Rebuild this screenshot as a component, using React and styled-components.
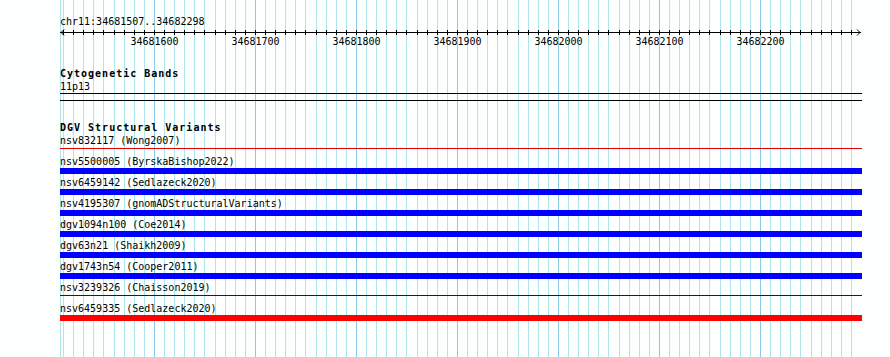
import React from 'react';
import styled, {createGlobalStyle} from 'styled-components';

/* Data */
const START = 34681507;
const END = 34682298;
const TRACK_WIDTH = 800;
const toX = bp => Math.round(((bp - START) * TRACK_WIDTH) / (END - START + 1));

const variants = [
  {name: 'nsv832117 (Wong2007)', kind: 'line', color: '#e00000'},
  {name: 'nsv5500005 (ByrskaBishop2022)', kind: 'bar', color: '#0000ff'},
  {name: 'nsv6459142 (Sedlazeck2020)', kind: 'bar', color: '#0000ff'},
  {name: 'nsv4195307 (gnomADStructuralVariants)', kind: 'bar', color: '#0000ff'},
  {name: 'dgv1094n100 (Coe2014)', kind: 'bar', color: '#0000ff'},
  {name: 'dgv63n21 (Shaikh2009)', kind: 'bar', color: '#0000ff'},
  {name: 'dgv1743n54 (Cooper2011)', kind: 'bar', color: '#0000ff'},
  {name: 'nsv3239326 (Chaisson2019)', kind: 'line', color: '#0000ff'},
  {name: 'nsv6459335 (Sedlazeck2020)', kind: 'bar', color: '#ff0000'},
];

const gridTicks = [];
for (let bp = Math.ceil(START / 10) * 10; bp <= END; bp += 10) {
  gridTicks.push({bp, x: toX(bp), major: bp % 100 === 0});
}

const GlobalStyle = createGlobalStyle`
  html, body {
    margin: 0;
    padding: 0;
    background: #fdfffe;
  }
`;

const Page = styled.div`
  /* Display & Box Model */
  width: 890px;
  height: 357px;
  overflow: hidden;
  padding-left: 60px;
  box-sizing: border-box;
`;

const Panel = styled.div`
  /* Positioning */
  position: relative;
  /* Display & Box Model */
  display: flex;
  flex-direction: column;
  width: 802px;
  height: 357px;
  /* Text */
  font-family: "DejaVu Sans Mono", "Liberation Mono", monospace;
  font-size: 10px;
  line-height: 13px;
  color: #000;
`;

const Grid = styled.svg`
  /* Positioning */
  position: absolute;
  top: 0;
  left: 0;
`;

const Content = styled.div`
  /* Positioning */
  position: relative;
  /* Display & Box Model */
  display: flex;
  flex-direction: column;
`;

const Position = styled.div`
  margin-top: 15px;
  white-space: pre;
`;

const Ruler = styled.svg`
  display: block;
  margin-top: -1px;
`;

const TrackTitle = styled.div`
  /* Display & Box Model */
  margin-top: ${props => props.$gap}px;
  /* Text */
  font-weight: bold;
  letter-spacing: 1px;
  white-space: pre;
`;

const Label = styled.div`
  white-space: pre;
`;

const DoubleRule = styled.div`
  height: 6px;
  border-top: 1px solid #000;
  border-bottom: 1px solid #000;
`;

const FeatureRow = styled.div`
  /* Display & Box Model */
  display: flex;
  flex-direction: column;
  margin-bottom: 2px;
`;

const FeatureSlot = styled.div`
  /* Display & Box Model */
  height: 6px;
  display: flex;
  align-items: ${props => (props.$kind === 'bar' ? 'stretch' : 'flex-start')};
  padding-top: ${props => (props.$kind === 'bar' ? 0 : 1)}px;
  box-sizing: border-box;
`;

const FeatureBar = styled.div`
  width: 100%;
  height: ${props => (props.$kind === 'bar' ? '6px' : '1px')};
  background: ${props => props.$color};
`;

const GridLines = () => (
  <Grid width="802" height="357">
    <line x1="0.5" y1="0" x2="0.5" y2="357" stroke="#aee6ec" />
    {gridTicks.map(t => (
      <line
        key={t.bp}
        x1={t.x + 0.5}
        y1="0"
        x2={t.x + 0.5}
        y2="357"
        stroke={t.major ? '#8ccbe8' : '#aee6ec'}
      />
    ))}
  </Grid>
);

const BaseRuler = () => (
  <Ruler width="802" height="21">
    <line x1="0" y1="5.5" x2="801" y2="5.5" stroke="#000" />
    <polyline points="4,2.5 1,5.5 4,8.5" fill="none" stroke="#000" />
    <polyline points="797,2.5 800,5.5 797,8.5" fill="none" stroke="#000" />
    {gridTicks.map(t => (
      <line key={t.bp} x1={t.x + 0.5} y1="3" x2={t.x + 0.5} y2="8" stroke="#000" />
    ))}
    {gridTicks
      .filter(t => t.major)
      .map(t => (
        <text
          key={t.bp}
          x={t.x + 0.5}
          y="18"
          textAnchor="middle"
          fontFamily="DejaVu Sans Mono, monospace"
          fontSize="10"
          fill="#000"
        >
          {t.bp}
        </text>
      ))}
  </Ruler>
);

const App = () => (
  <Page>
    <GlobalStyle />
    <Panel>
      <GridLines />
      <Content>
        <Position>chr11:34681507..34682298</Position>
        <BaseRuler />
        <TrackTitle $gap={19}>Cytogenetic Bands</TrackTitle>
        <Label>11p13</Label>
        <DoubleRule />
        <TrackTitle $gap={20}>DGV Structural Variants</TrackTitle>
        {variants.map(v => (
          <FeatureRow key={v.name}>
            <Label>{v.name}</Label>
            <FeatureSlot $kind={v.kind}>
              <FeatureBar $kind={v.kind} $color={v.color} />
            </FeatureSlot>
          </FeatureRow>
        ))}
      </Content>
    </Panel>
  </Page>
);

export default App;
